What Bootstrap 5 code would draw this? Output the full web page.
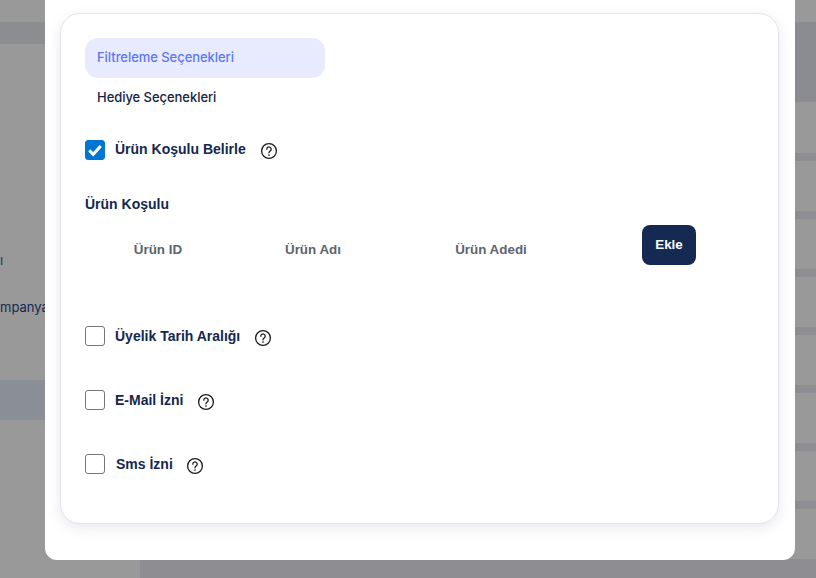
<!DOCTYPE html>
<html lang="tr">
<head>
<meta charset="utf-8">
<title>Filtreleme</title>
<link href="https://cdn.jsdelivr.net/npm/bootstrap@5.3.0/dist/css/bootstrap.min.css" rel="stylesheet">
<style>
html,body{height:578px;overflow:hidden;background:#8e8e92;font-family:"Liberation Sans",Arial,sans-serif}
.stage{position:relative;width:816px;height:578px;overflow:hidden}
.sidepane{width:140px;height:578px;background:#999;flex:none;overflow:hidden}
.sidehead{height:22px;margin-top:22px;background:#8c8d91}
.sidetext{font-family:"Inter",sans-serif;font-size:13px;line-height:20px;color:#14294f;white-space:nowrap}
.sidetext.first{margin-top:206px;color:#123a75}
.sidetext.second{margin-top:27px}
.sideactive{height:40px;margin-top:63px;background:#8a8e96}
.mainpane{flex:1;min-width:0}
.maintop{height:22px;background:#999}
.mainhead{height:80px;background:#8b8c91}
.mainrow{height:50px;margin-left:25px;background:#999;margin-bottom:8px;border-radius:8px 0 0 8px}
.mainrow.firstrow{height:51px}
.dlg{position:absolute;left:45px;top:-40px;width:750px;height:600px;background:#fff;border-radius:12px;padding:53px 16px 37px 15px}
.panel{height:511px;border:1px solid #e3e4ec;border-radius:20px;background:#fff;box-shadow:0 4px 14px rgba(30,40,90,.1);padding:24px;position:relative}
.tabs{width:240px}
.tabs .nav-link{height:40px;padding:0 12px;line-height:39px;font-family:"Inter",sans-serif;font-size:13px;font-weight:500;color:#16233f;border-radius:13px;letter-spacing:-.05px}
.tabs .nav-link.active{background:#e8ebfd;color:#5c76f7}
.opt{height:20px;display:flex;align-items:center}
.opt.o1{margin-top:22px}
.opt.o2{margin-top:0}
.opt.o3,.opt.o4{margin-top:44px}
.box[type=checkbox]{width:20px;height:20px;margin:0;border:1px solid #767676;border-radius:3px;flex:none}
.box[type=checkbox]:checked{background-color:#0075d4;border-color:#0075d4;background-size:100% 100%;background-image:url("data:image/svg+xml,%3csvg xmlns='http://www.w3.org/2000/svg' viewBox='0 0 20 20'%3e%3cpath fill='none' stroke='%23fff' stroke-width='3.4' d='M3.6 10.4l4.4 4.4 8.4-9.2'/%3e%3c/svg%3e")}
.opttext{font-size:14px;font-weight:700;color:#14274e;margin:0 0 0 10px}
.opt.o1 .opttext{margin-top:-2px}
.opt.o4 .opttext{margin-left:11px}
.help{flex:none;margin-top:4px;margin-left:14px}
.opt.o1 .help{margin-top:2px}
.opt.o4 .help{margin-left:13px}
.sect{font-size:14px;font-weight:700;color:#14274e;margin:36px 0 0;line-height:16px}
.grid{width:666px;margin-top:13px;margin-bottom:61px}
.grid th{padding:10px 0 0;height:40px;border:0;font-size:13.4px;font-weight:700;color:#5d6470;text-align:center;vertical-align:middle;line-height:16px}
.grid th.c4{padding:0}
.c1{width:146px}.c2{width:164px}.c3{width:192px}.c4{width:164px}
.addbtn{width:54px;height:40px;padding:0;background:#152a52;border:0;border-radius:8px;color:#fff;font-size:13.4px;font-weight:700}
</style>
</head>
<body>
<div class="stage">
  <div class="d-flex">
    <div class="sidepane">
      <div class="sidehead"></div>
      <div class="sidetext first">ı</div>
      <div class="sidetext second">mpanyalar</div>
      <div class="sideactive"></div>
    </div>
    <div class="mainpane">
      <div class="maintop"></div>
      <div class="mainhead"></div>
      <div class="mainrow firstrow"></div>
      <div class="mainrow"></div>
      <div class="mainrow"></div>
      <div class="mainrow"></div>
      <div class="mainrow"></div>
      <div class="mainrow"></div>
      <div class="mainrow"></div>
      <div class="mainrow"></div>
    </div>
  </div>
  <div class="dlg">
    <div class="panel">
      <ul class="nav nav-pills flex-column tabs">
        <li class="nav-item"><a class="nav-link active" href="#">Filtreleme Seçenekleri</a></li>
        <li class="nav-item"><a class="nav-link" href="#">Hediye Seçenekleri</a></li>
      </ul>
      <div class="opt o1">
        <input class="form-check-input box" type="checkbox" checked>
        <span class="opttext">Ürün Koşulu Belirle</span>
        <svg class="help" width="18" height="18" viewBox="0 0 18 18" fill="none" stroke="#1a1a1a" stroke-width="1.3"><circle cx="9" cy="9" r="7.4"/><path d="M6.8 7.2a2.2 2.2 0 1 1 3.4 1.8c-.8.5-1.2 1-1.2 1.8" stroke-linecap="round"/><circle cx="9" cy="13" r=".5" fill="#1a1a1a" stroke-width=".6"/></svg>
      </div>
      <p class="sect">Ürün Koşulu</p>
      <table class="table table-borderless grid">
        <thead>
          <tr>
            <th class="c1">Ürün ID</th>
            <th class="c2">Ürün Adı</th>
            <th class="c3">Ürün Adedi</th>
            <th class="c4"><button type="button" class="btn addbtn">Ekle</button></th>
          </tr>
        </thead>
      </table>
      <div class="opt o2">
        <input class="form-check-input box" type="checkbox">
        <span class="opttext">Üyelik Tarih Aralığı</span>
        <svg class="help" width="18" height="18" viewBox="0 0 18 18" fill="none" stroke="#1a1a1a" stroke-width="1.3"><circle cx="9" cy="9" r="7.4"/><path d="M6.8 7.2a2.2 2.2 0 1 1 3.4 1.8c-.8.5-1.2 1-1.2 1.8" stroke-linecap="round"/><circle cx="9" cy="13" r=".5" fill="#1a1a1a" stroke-width=".6"/></svg>
      </div>
      <div class="opt o3">
        <input class="form-check-input box" type="checkbox">
        <span class="opttext">E-Mail İzni</span>
        <svg class="help" width="18" height="18" viewBox="0 0 18 18" fill="none" stroke="#1a1a1a" stroke-width="1.3"><circle cx="9" cy="9" r="7.4"/><path d="M6.8 7.2a2.2 2.2 0 1 1 3.4 1.8c-.8.5-1.2 1-1.2 1.8" stroke-linecap="round"/><circle cx="9" cy="13" r=".5" fill="#1a1a1a" stroke-width=".6"/></svg>
      </div>
      <div class="opt o4">
        <input class="form-check-input box" type="checkbox">
        <span class="opttext">Sms İzni</span>
        <svg class="help" width="18" height="18" viewBox="0 0 18 18" fill="none" stroke="#1a1a1a" stroke-width="1.3"><circle cx="9" cy="9" r="7.4"/><path d="M6.8 7.2a2.2 2.2 0 1 1 3.4 1.8c-.8.5-1.2 1-1.2 1.8" stroke-linecap="round"/><circle cx="9" cy="13" r=".5" fill="#1a1a1a" stroke-width=".6"/></svg>
      </div>
    </div>
  </div>
</div>
<script src="https://cdn.jsdelivr.net/npm/bootstrap@5.3.0/dist/js/bootstrap.bundle.min.js"></script>
</body>
</html>
